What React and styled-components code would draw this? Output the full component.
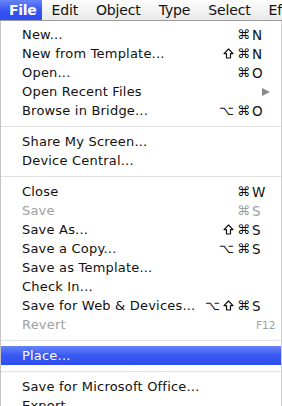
import React from "react";
import styled, { createGlobalStyle } from "styled-components";

const GlobalStyle = createGlobalStyle`
  html, body {
    margin: 0;
    padding: 0;
    background: #fff;
  }
  body {
    font-family: "DejaVu Sans", "Liberation Sans", sans-serif;
    -webkit-font-smoothing: antialiased;
  }
`;

const Screen = styled.div`
  width: 282px;
  height: 406px;
  overflow: hidden;
  background: #fff;
`;

const MenuBar = styled.div`
  display: flex;
  height: 20px;
  border-bottom: 1px solid #9a9a9a;
  background: linear-gradient(#fdfdfd, #e9e9e9);
  white-space: nowrap;
`;

const BarItem = styled.div`
  display: flex;
  align-items: center;
  padding-left: 9px;
  padding-right: ${(p) => (p.$active ? "6px" : "9px")};
  font-size: 14px;
  letter-spacing: ${(p) => (p.$active ? "-0.3px" : "-0.15px")};
  font-weight: ${(p) => (p.$active ? 700 : 400)};
  color: ${(p) => (p.$active ? "#fff" : "#111")};
  background: ${(p) =>
    p.$active ? "linear-gradient(#6784f6, #3453f2 55%, #2d4cf1)" : "none"};
`;

const Menu = styled.div`
  display: flex;
  flex-direction: column;
  padding-top: 4px;
  border-left: 1px solid #c4c4c4;
  border-right: 1px solid #cfcfcf;
  background: #fff;
  height: 100%;
`;

const Row = styled.div`
  display: flex;
  align-items: center;
  height: 19px;
  padding-left: 21px;
  font-size: 13px;
  white-space: nowrap;
  color: ${(p) => (p.$active ? "#fff" : p.$disabled ? "#a0a0a0" : "#111")};
  background: ${(p) =>
    p.$active ? "linear-gradient(#6784f6, #3a58f3 50%, #2e4df2)" : "none"};
`;

const Label = styled.span`
  flex: 1;
  letter-spacing: 0.2px;
`;

const Mods = styled.span`
  display: flex;
  align-items: center;
  justify-content: flex-end;
  gap: 3px;
  padding-right: 2px;
  font-size: 13px;
`;

const Key = styled.span`
  width: 29px;
  font-size: ${(p) => (p.$small ? "10.5px" : "13.5px")};
  padding-left: ${(p) => (p.$small ? "4px" : "0")};
  box-sizing: border-box;
`;

const Arrow = styled.span`
  width: 29px;
  display: flex;
  padding-left: 10px;
  box-sizing: border-box;
  &::before {
    content: "";
    border-left: 8px solid #8a8a8a;
    border-top: 4.5px solid transparent;
    border-bottom: 4.5px solid transparent;
  }
`;

const Separator = styled.div`
  height: 12px;
  display: flex;
  align-items: center;
  &::after {
    content: "";
    flex: 1;
    height: 1px;
    background: #e2e2e2;
  }
`;

const ShiftIcon = () => (
  <svg width="11" height="11" viewBox="0 0 11 11">
    <path
      d="M5.5 1 L10 5.6 H7.5 V10 H3.5 V5.6 H1 Z"
      fill="none"
      stroke="currentColor"
      strokeWidth="1.2"
      strokeLinejoin="round"
    />
  </svg>
);

const Mod = ({ m }) => (m === "S" ? <ShiftIcon /> : <span>{m}</span>);

const items = [
  { label: "New...", mods: "⌘", key: "N" },
  { label: "New from Template...", mods: "S⌘", key: "N" },
  { label: "Open...", mods: "⌘", key: "O" },
  { label: "Open Recent Files", submenu: true },
  { label: "Browse in Bridge...", mods: "⌥⌘", key: "O" },
  "sep",
  { label: "Share My Screen..." },
  { label: "Device Central..." },
  "sep",
  { label: "Close", mods: "⌘", key: "W" },
  { label: "Save", mods: "⌘", key: "S", disabled: true },
  { label: "Save As...", mods: "S⌘", key: "S" },
  { label: "Save a Copy...", mods: "⌥⌘", key: "S" },
  { label: "Save as Template..." },
  { label: "Check In..." },
  { label: "Save for Web & Devices...", mods: "⌥S⌘", key: "S" },
  { label: "Revert", key: "F12", small: true, disabled: true },
  "sep",
  { label: "Place...", active: true },
  "sep",
  { label: "Save for Microsoft Office..." },
  { label: "Export..." },
];

const barItems = ["File", "Edit", "Object", "Type", "Select", "Effect"];

export default function App() {
  return (
    <Screen>
      <GlobalStyle />
      <MenuBar>
        {barItems.map((name, i) => (
          <BarItem key={name} $active={i === 0}>
            {name}
          </BarItem>
        ))}
      </MenuBar>
      <Menu>
        {items.map((item, i) =>
          item === "sep" ? (
            <Separator key={i} />
          ) : (
            <Row key={i} $active={item.active} $disabled={item.disabled}>
              <Label>{item.label}</Label>
              {item.mods && (
                <Mods>
                  {item.mods.split("").map((m, j) => (
                    <Mod key={j} m={m} />
                  ))}
                </Mods>
              )}
              {item.submenu ? (
                <Arrow />
              ) : (
                <Key $small={item.small}>{item.key || ""}</Key>
              )}
            </Row>
          )
        )}
      </Menu>
    </Screen>
  );
}
